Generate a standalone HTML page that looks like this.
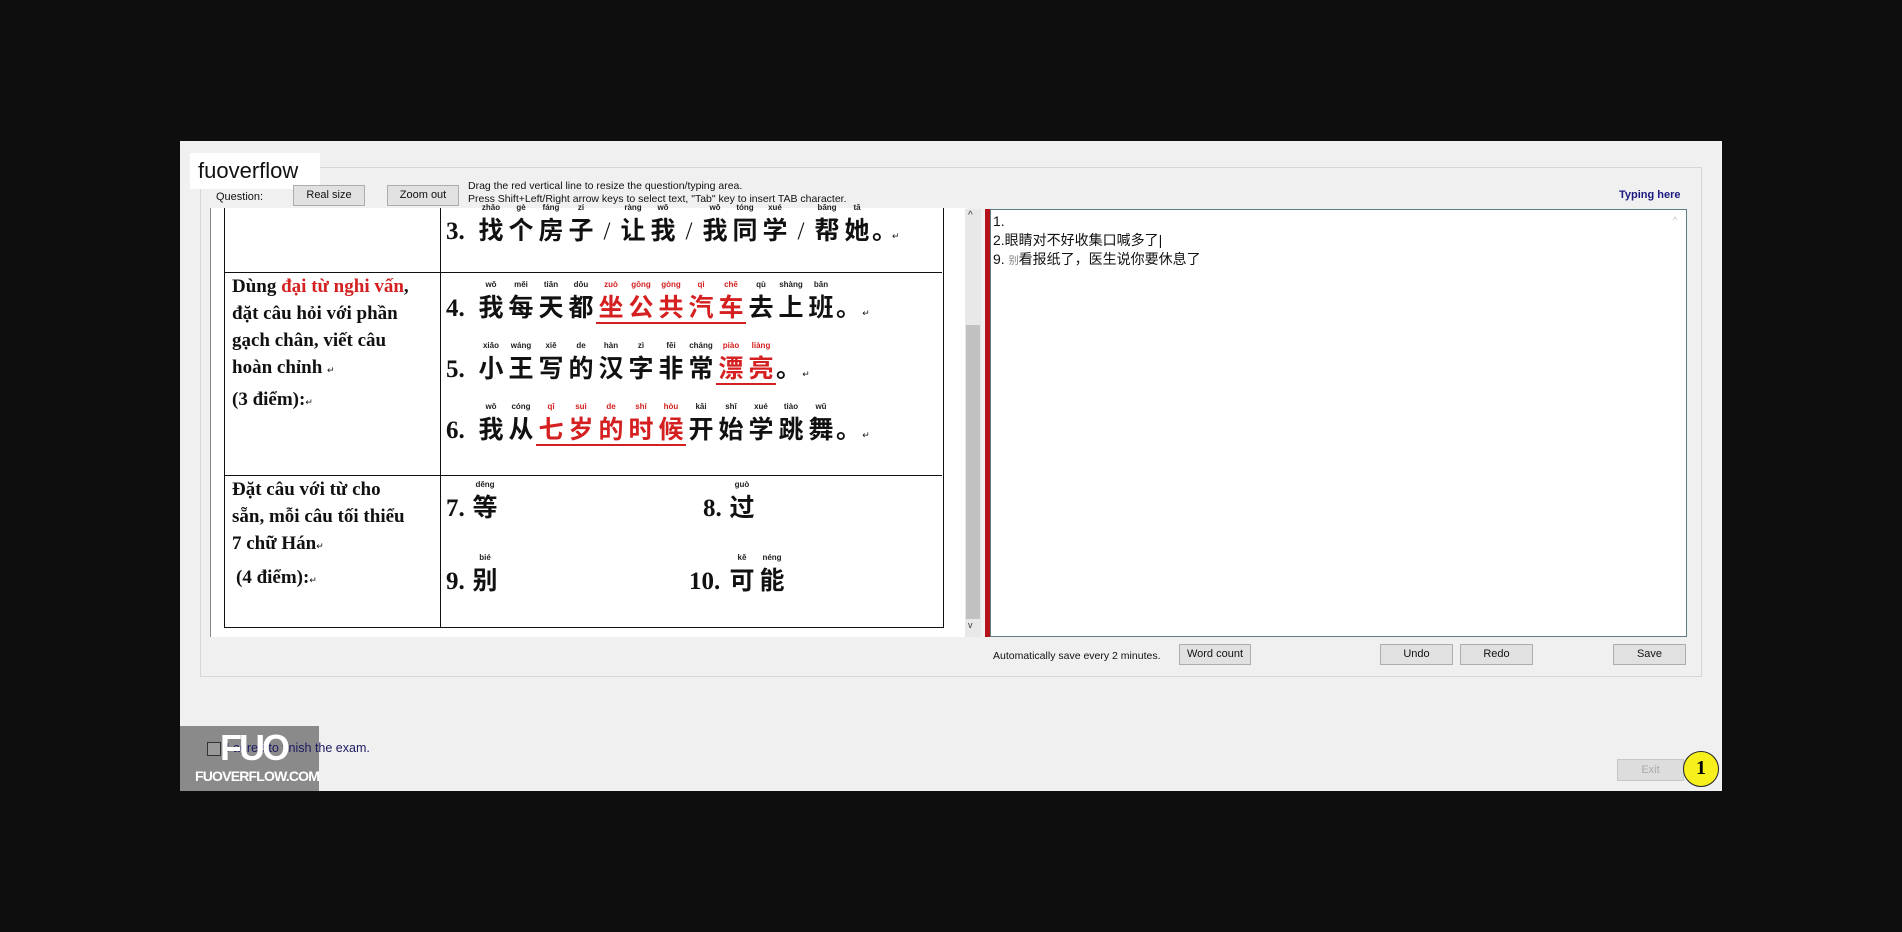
<!DOCTYPE html>
<html><head><meta charset="utf-8"><style>
body{margin:0;width:1902px;height:932px;background:#0e0e0e;position:relative;overflow:hidden;font-family:"Liberation Sans","Noto Sans CJK SC",sans-serif}
.a{position:absolute}
.btn{position:absolute;background:#e1e1e1;border:1px solid #adadad;font-size:11px;color:#111;text-align:center;box-sizing:border-box}
.t{font-family:"Liberation Serif","Noto Serif CJK SC",serif;font-weight:bold;font-size:19px;color:#111;white-space:nowrap}
.cn{font-family:"Liberation Serif","Noto Sans CJK SC",serif;font-weight:700;font-size:25px;color:#111;white-space:nowrap;line-height:30px}
.c{display:inline-block;position:relative;width:30px;text-align:center}
.c i{position:absolute;top:-14px;left:-6px;right:-6px;font-style:normal;font-size:8px;line-height:10px;font-weight:bold;font-family:"Liberation Sans",sans-serif;color:#222}
.r,.r i{color:#d42020}
.u{border-bottom:2px solid #d42020}
.n{display:inline-block;width:30px}
.s{display:inline-block;width:22px;text-align:center;font-weight:normal}
.e{font-size:9px;font-weight:normal}
</style></head><body>
<div class="a" style="left:180px;top:141px;width:1542px;height:650px;background:#f0f0f0"></div>
<div class="a" style="left:200px;top:167px;width:1502px;height:510px;border:1px solid #d5d5d5;box-sizing:border-box"></div>
<div class="a" style="left:190px;top:153px;width:130px;height:36px;background:#fff;font-size:22px;color:#111;line-height:36px;padding-left:8px;box-sizing:border-box">fuoverflow</div>
<div class="a" style="left:216px;top:191px;font-size:11px;color:#111">Question:</div>
<div class="btn" style="left:293px;top:185px;width:72px;height:21px;line-height:19px">Real size</div>
<div class="btn" style="left:387px;top:185px;width:72px;height:21px;line-height:19px">Zoom out</div>
<div class="a" style="left:468px;top:180px;font-size:10.5px;color:#111;line-height:13px">Drag the red vertical line to resize the question/typing area.<br>Press Shift+Left/Right arrow keys to select text, "Tab" key to insert TAB character.</div>
<div class="a" style="left:1619px;top:189px;font-size:11px;font-weight:bold;color:#1a1a80">Typing here</div>

<div class="a" style="left:210px;top:208px;width:756px;height:429px;background:#fff;border-left:1px solid #888;overflow:hidden">
 <div class="a" style="left:13px;top:-10px;width:718px;height:429px;border:1.5px solid #111;border-top:none"></div>
 <div class="a" style="left:229px;top:-10px;width:0;height:429px;border-left:1.5px solid #111"></div>
 <div class="a" style="left:13px;top:64px;width:718px;border-top:1.5px solid #111"></div>
 <div class="a" style="left:13px;top:267px;width:718px;border-top:1.5px solid #111"></div>
</div>
<div class="a t" style="left:232px;top:273px;line-height:27px">Dùng <span class="r">đại từ nghi vấn</span>,<br>đặt câu hỏi với phần<br>gạch chân, viết câu<br>hoàn chỉnh <span class="e">↵</span></div>
<div class="a t" style="left:232px;top:389px">(3 điểm):<span class="e">↵</span></div>
<div class="a t" style="left:232px;top:476px;line-height:27px">Đặt câu với từ cho<br>sẵn, mỗi câu tối thiểu<br>7 chữ Hán<span class="e">↵</span></div>
<div class="a t" style="left:236px;top:567px">(4 điểm):<span class="e">↵</span></div>

<div class="a cn" style="left:446px;top:217px"><span class="n">3.</span><span class="c"><i>zhǎo</i>找</span><span class="c"><i>gè</i>个</span><span class="c"><i>fáng</i>房</span><span class="c"><i>zi</i>子</span><span class="s">/</span><span class="c"><i>ràng</i>让</span><span class="c"><i>wǒ</i>我</span><span class="s">/</span><span class="c"><i>wǒ</i>我</span><span class="c"><i>tóng</i>同</span><span class="c"><i>xué</i>学</span><span class="s">/</span><span class="c"><i>bāng</i>帮</span><span class="c"><i>tā</i>她</span><span class="c" style="width:20px">。</span><span class="e">↵</span></div>

<div class="a cn" style="left:446px;top:294px"><span class="n">4.</span><span class="c"><i>wǒ</i>我</span><span class="c"><i>měi</i>每</span><span class="c"><i>tiān</i>天</span><span class="c"><i>dōu</i>都</span><span class="u"><span class="c r"><i>zuò</i>坐</span><span class="c r"><i>gōng</i>公</span><span class="c r"><i>gòng</i>共</span><span class="c r"><i>qì</i>汽</span><span class="c r"><i>chē</i>车</span></span><span class="c"><i>qù</i>去</span><span class="c"><i>shàng</i>上</span><span class="c"><i>bān</i>班</span><span class="c" style="width:20px">。</span> <span class="e">↵</span></div>

<div class="a cn" style="left:446px;top:355px"><span class="n">5.</span><span class="c"><i>xiǎo</i>小</span><span class="c"><i>wáng</i>王</span><span class="c"><i>xiě</i>写</span><span class="c"><i>de</i>的</span><span class="c"><i>hàn</i>汉</span><span class="c"><i>zì</i>字</span><span class="c"><i>fēi</i>非</span><span class="c"><i>cháng</i>常</span><span class="u"><span class="c r"><i>piào</i>漂</span><span class="c r"><i>liàng</i>亮</span></span><span class="c" style="width:20px">。</span> <span class="e">↵</span></div>

<div class="a cn" style="left:446px;top:416px"><span class="n">6.</span><span class="c"><i>wǒ</i>我</span><span class="c"><i>cóng</i>从</span><span class="u"><span class="c r"><i>qī</i>七</span><span class="c r"><i>suì</i>岁</span><span class="c r"><i>de</i>的</span><span class="c r"><i>shí</i>时</span><span class="c r"><i>hòu</i>候</span></span><span class="c"><i>kāi</i>开</span><span class="c"><i>shǐ</i>始</span><span class="c"><i>xué</i>学</span><span class="c"><i>tiào</i>跳</span><span class="c"><i>wǔ</i>舞</span><span class="c" style="width:20px">。</span> <span class="e">↵</span></div>

<div class="a cn" style="left:446px;top:494px"><span class="n" style="width:24px">7.</span><span class="c"><i>děng</i>等</span></div>
<div class="a cn" style="left:703px;top:494px"><span class="n" style="width:24px">8.</span><span class="c"><i>guò</i>过</span></div>
<div class="a cn" style="left:446px;top:567px"><span class="n" style="width:24px">9.</span><span class="c"><i>bié</i>别</span></div>
<div class="a cn" style="left:689px;top:567px"><span class="n" style="width:38px">10.</span><span class="c"><i>kě</i>可</span><span class="c"><i>néng</i>能</span></div>

<div class="a" style="left:965px;top:209px;width:16px;height:428px;background:#e8e8e8"></div>
<div class="a" style="left:966px;top:325px;width:14px;height:294px;background:#c1c1c1"></div>
<div class="a" style="left:968px;top:210px;font-size:10px;color:#333">^</div>
<div class="a" style="left:968px;top:620px;font-size:9px;color:#333">v</div>
<div class="a" style="left:985px;top:209px;width:5px;height:428px;background:#b5121b"></div>

<div class="a" style="left:990px;top:209px;width:697px;height:428px;background:#fff;border:1px solid #5e7d84;box-sizing:border-box"></div>
<div class="a" style="left:993px;top:212px;font-size:14px;line-height:19px;color:#111">1.<br>2.眼睛对不好收集口喊多了|<br>9. <span style="font-size:10px;color:#777">别</span>看报纸了，医生说你要休息了</div>
<div class="a" style="left:1673px;top:215px;font-size:9px;color:#bbb">^</div>

<div class="a" style="left:993px;top:650px;font-size:10.5px;color:#111">Automatically save every 2 minutes.</div>
<div class="btn" style="left:1179px;top:644px;width:72px;height:21px;line-height:19px">Word count</div>
<div class="btn" style="left:1380px;top:644px;width:73px;height:21px;line-height:19px">Undo</div>
<div class="btn" style="left:1460px;top:644px;width:73px;height:21px;line-height:19px">Redo</div>
<div class="btn" style="left:1613px;top:644px;width:73px;height:21px;line-height:19px">Save</div>

<div class="btn" style="left:1617px;top:759px;width:67px;height:22px;line-height:20px;color:#aaa;background:#ddd;border-color:#c8c8c8">Exit</div>
<div class="a" style="left:1683px;top:751px;width:36px;height:36px;border-radius:50%;background:#f7f01c;border:1.5px solid #222;box-sizing:border-box;text-align:center;line-height:33px;font-weight:bold;font-size:20px;font-family:'Liberation Serif',serif">1</div>

<div class="a" style="left:180px;top:726px;width:139px;height:65px;background:#8a8a8a"></div>
<div class="a" style="left:207px;top:742px;width:12px;height:12px;border:1px solid #333;background:#999"></div>
<div class="a" style="left:226px;top:741px;font-size:12.5px;color:#1a1a60">I agree to finish the exam.</div>
<div class="a" style="left:220px;top:727px;font-size:36px;font-weight:bold;color:#fff;letter-spacing:-3px">FUO</div>
<div class="a" style="left:195px;top:768px;font-size:14px;font-weight:bold;color:#fff;letter-spacing:-0.8px">FUOVERFLOW.COM</div>
</body></html>
